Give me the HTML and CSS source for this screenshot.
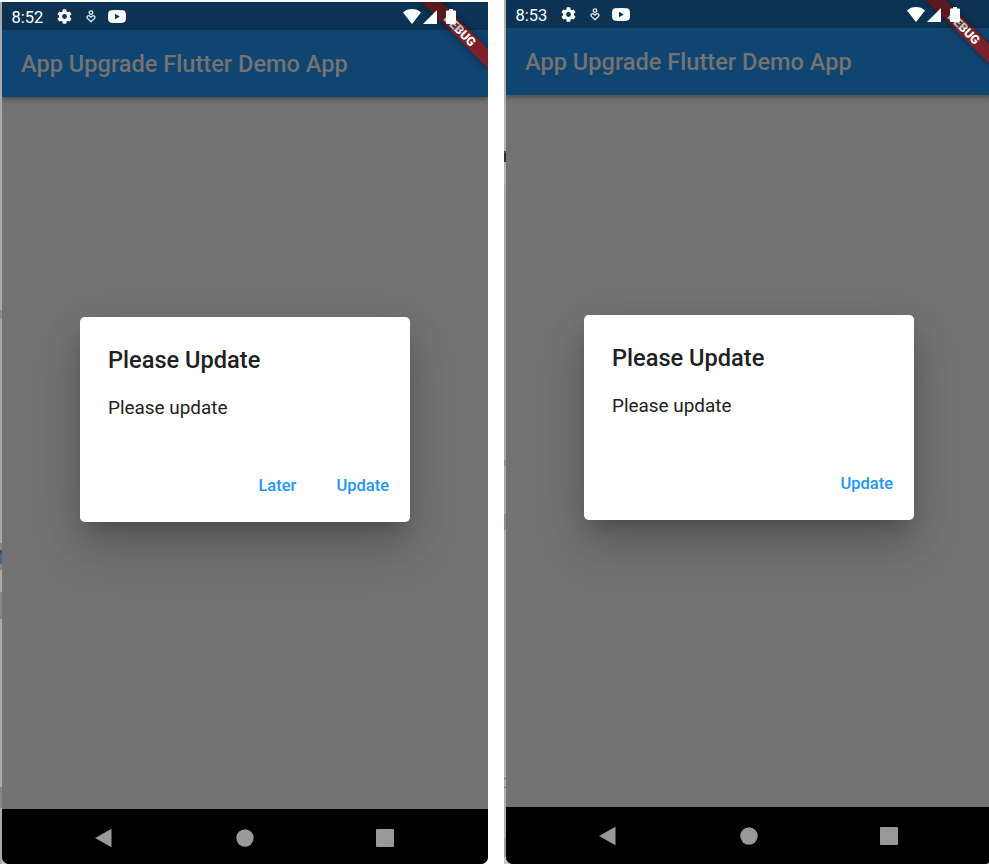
FILE: index.html
```html
<!DOCTYPE html>
<html lang="en">
<head>
<meta charset="utf-8">
<title>App Upgrade Flutter Demo App</title>
<link rel="stylesheet" href="styles.css">
</head>
<body>
<svg class="defs" aria-hidden="true">
  <symbol id="gear" viewBox="2 2 20 20"><path fill="#fff" d="M19.14 12.94c.04-.3.06-.61.06-.94 0-.32-.02-.64-.07-.94l2.03-1.58a.49.49 0 0 0 .12-.61l-1.92-3.32a.49.49 0 0 0-.59-.22l-2.39.96c-.5-.38-1.03-.7-1.62-.94l-.36-2.54a.48.48 0 0 0-.48-.41h-3.84c-.24 0-.43.17-.47.41l-.36 2.54c-.59.24-1.13.57-1.62.94l-2.39-.96c-.22-.08-.47 0-.59.22L2.74 8.87c-.12.21-.08.47.12.61l2.03 1.58c-.05.3-.09.63-.09.94s.02.64.07.94l-2.03 1.58a.49.49 0 0 0-.12.61l1.92 3.32c.12.22.37.29.59.22l2.39-.96c.5.38 1.03.7 1.62.94l.36 2.54c.05.24.24.41.48.41h3.84c.24 0 .44-.17.47-.41l.36-2.54c.59-.24 1.13-.56 1.62-.94l2.39.96c.22.08.47 0 .59-.22l1.92-3.32c.12-.22.07-.47-.12-.61zM12 15.200a3.200 3.200 0 1 1 0-6.400 3.200 3.200 0 0 1 0 6.400z"/></symbol>
  <symbol id="heart" viewBox="0 0 10 13"><g fill="none" stroke="#e4eaee" stroke-width="1.3"><circle cx="5" cy="2.6" r="1.8"/><path d="M5 11.8 1.5 8.4C.1 6.6 2.5 4.7 4 6.2l1 1 1-1c1.5-1.5 3.900.4 2.500 2.200z"/></g></symbol>
  <symbol id="video" viewBox="0 0 18 13"><path fill="#fff" fill-rule="evenodd" d="M3 .3Q9-.1 15 .3 17.600.4 17.800 3q.3 3.500 0 7-.2 2.400-2.800 2.700-6 .4-12 0Q.4 12.400.2 10-.1 6.500.2 3 .4.500 3 .3zM7 3.800v5.400l4.800-2.700z"/></symbol>
  <symbol id="wifi" viewBox="0 0 18 15"><path fill="#fff" d="M9 15 0 3.400Q3.800 0 9 0t9 3.400z"/></symbol>
  <symbol id="signal" viewBox="0 0 14 14"><path fill="#fff" d="M14 0v14H0z"/></symbol>
  <symbol id="battery" viewBox="0 0 10 15"><path fill="#fff" d="M3 0h4v1.500h2q1 0 1 1V14q0 1-1 1H1q-1 0-1-1V2.500q0-1 1-1h2z"/></symbol>
</svg>
<main class="shots">
  <section class="shot shot-left">
    <div class="backdrop backdrop-left"></div>
    <div class="phone">
      <header class="status">
        <span class="clock">8:52</span>
        <svg class="gear"><use href="#gear"/></svg>
        <svg class="heart"><use href="#heart"/></svg>
        <svg class="video"><use href="#video"/></svg>
        <svg class="wifi"><use href="#wifi"/></svg>
        <svg class="signal"><use href="#signal"/></svg>
        <svg class="battery"><use href="#battery"/></svg>
      </header>
      <div class="appbar">App Upgrade Flutter Demo App</div>
      <div class="banner">DEBUG</div>
      <div class="content">
        <div class="dialog">
          <h1>Please Update</h1>
          <p>Please update</p>
          <div class="actions"><span>Later</span><span>Update</span></div>
        </div>
      </div>
      <nav class="nav">
        <svg viewBox="0 0 20 20"><path d="M1 10 17.500.7v18.600z"/></svg>
        <svg viewBox="0 0 20 20"><circle cx="10" cy="10" r="8.700"/></svg>
        <svg viewBox="0 0 20 20"><rect x="1" y="1" width="18" height="18" rx="1"/></svg>
      </nav>
    </div>
  </section>
  <section class="shot">
    <div class="backdrop backdrop-right"></div>
    <div class="phone">
      <header class="status">
        <span class="clock">8:53</span>
        <svg class="gear"><use href="#gear"/></svg>
        <svg class="heart"><use href="#heart"/></svg>
        <svg class="video"><use href="#video"/></svg>
        <svg class="wifi"><use href="#wifi"/></svg>
        <svg class="signal"><use href="#signal"/></svg>
        <svg class="battery"><use href="#battery"/></svg>
      </header>
      <div class="appbar">App Upgrade Flutter Demo App</div>
      <div class="banner">DEBUG</div>
      <div class="content">
        <div class="dialog">
          <h1>Please Update</h1>
          <p>Please update</p>
          <div class="actions"><span>Update</span></div>
        </div>
      </div>
      <nav class="nav">
        <svg viewBox="0 0 20 20"><path d="M1 10 17.500.7v18.600z"/></svg>
        <svg viewBox="0 0 20 20"><circle cx="10" cy="10" r="8.700"/></svg>
        <svg viewBox="0 0 20 20"><rect x="1" y="1" width="18" height="18" rx="1"/></svg>
      </nav>
    </div>
  </section>
</main>
</body>
</html>
```
FILE: styles.css
```css
* { box-sizing: border-box; }
body { margin: 0; height: 864px; overflow: hidden; background: #fff; font-family: Roboto, sans-serif; }
.defs { display: none; }
.shots { display: flex; gap: 16px; width: 989px; height: 864px; overflow: hidden; }
.shot { display: flex; flex: none; width: 488px; height: 864px; background: linear-gradient(90deg, #c8c8d0 20px, #fff 20px); }
.shot-left { padding-top: 2px; background: linear-gradient(#fff 2px, #0000 2px), linear-gradient(90deg, #c8c8d0 20px, #fff 20px); }
.backdrop { flex: none; width: 2px; }
.backdrop-left { background: linear-gradient(#aaa 308px, #998c7b 308px 317px, #a8a8a8 317px 541px, #858585 541px 548px, #484d55 548px 552px, #376b96 552px 562px, #858585 562px 568px, #aaa 568px 590px, #858585 590px 617px, #aaa 617px 785px, #858585 785px 806px, #aaa 806px); }
.backdrop-right { background: linear-gradient(#b1b1a5 151px, #25587c 151px 153px, #303030 153px 162px, #b1b1a5 162px 185px, #a7a7aa 185px 460px, #8b919a 460px 466px, #a7a7ad 466px 514px, #988a82 514px 530px, #adadad 530px 778px, #777 778px 779px, #aaa 779px 787px, #777 787px 788px, #adadad 788px 838px, #9a9aa2 838px 857px, #c8c8d0 857px); }
.phone { position: relative; display: flex; flex-direction: column; flex: none; width: 486px; height: 100%; overflow: hidden; background: #737373; border-radius: 0 0 7px 7px; }

.status { position: relative; z-index: 3; display: flex; align-items: center; flex: none; height: 28px; padding-left: 9.500px; background: rgba(0, 0, 0, .25); }
.clock { width: 45.500px; color: #fff; font-size: 16.500px; line-height: 27px; padding-top: 3px; }
.status svg { flex: none; display: block; }
.gear { width: 15px; height: 15px; margin-top: 1px; }
.heart { width: 10px; height: 13px; margin-left: 14px; }
.video { width: 18px; height: 13px; margin-left: 12px; margin-top: 1px; }
.wifi { width: 18px; height: 15px; margin-left: 277px; }
.signal { width: 14px; height: 14px; margin-left: 2px; margin-top: 1px; }
.battery { width: 10px; height: 15px; margin-left: 8.500px; }

.appbar { position: relative; z-index: 1; flex: none; height: 94.500px; margin-top: -28px; padding: 29px 0 0 19px; background: #104471; color: #737373; font-size: 23.600px; font-weight: 500; line-height: 67px; box-shadow: 0 2px 5px rgba(0, 0, 0, .4); }
.banner { position: absolute; z-index: 2; top: 21.300px; right: -19px; width: 94.600px; height: 14.200px; padding-left: 1px; transform: rotate(45deg); background: #7a202a; box-shadow: 0 0 7px rgba(0, 0, 0, .4); color: #fff; font-size: 12.300px; font-weight: 900; line-height: 14px; text-align: center; }

.content { flex: none; height: 712.500px; padding: 220.500px 0 0 77.500px; }
.dialog { width: 330.500px; height: 205px; padding: 29px 9.500px 9.500px 28.500px; background: #fff; border-radius: 4.700px; box-shadow: 0 13px 18px -8px rgba(0, 0, 0, .2), 0 28px 45px 3px rgba(0, 0, 0, .14), 0 11px 40px 2px rgba(0, 0, 0, .08); }
h1 { margin: 0; color: #212121; font-size: 23.600px; font-weight: 500; line-height: 28px; }
p { margin: 22px 0 0; color: #212121; font-size: 18.900px; font-weight: 400; line-height: 24px; }
.actions { display: flex; justify-content: flex-end; gap: 40px; margin-top: 52px; padding-right: 11.500px; color: #2196f3; font-size: 16.500px; font-weight: 500; line-height: 28px; }

.nav { display: flex; gap: 120.500px; align-items: flex-start; flex: 1; padding: 18.700px 0 0 92px; background: #000; }
.nav svg { flex: none; width: 20px; height: 20px; fill: #999; }
```
